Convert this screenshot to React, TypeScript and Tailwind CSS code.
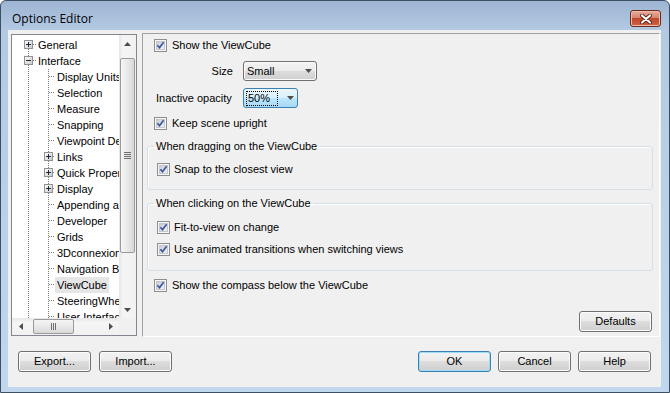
import * as React from "react";

type Row = { l: 0 | 1; t: string; e?: "plus" | "minus"; first?: boolean; sel?: boolean };

const ROWS: Row[] = [
  { l: 0, t: "General", e: "plus", first: true },
  { l: 0, t: "Interface", e: "minus" },
  { l: 1, t: "Display Units" },
  { l: 1, t: "Selection" },
  { l: 1, t: "Measure" },
  { l: 1, t: "Snapping" },
  { l: 1, t: "Viewpoint Defaults" },
  { l: 1, t: "Links", e: "plus" },
  { l: 1, t: "Quick Properties", e: "plus" },
  { l: 1, t: "Display", e: "plus" },
  { l: 1, t: "Appending and Merging" },
  { l: 1, t: "Developer" },
  { l: 1, t: "Grids" },
  { l: 1, t: "3Dconnexion" },
  { l: 1, t: "Navigation Bar" },
  { l: 1, t: "ViewCube", sel: true },
  { l: 1, t: "SteeringWheels" },
  { l: 1, t: "User Interface" },
];

// Win7-ish expander box
function Expander({ x, kind }: { x: number; kind: "plus" | "minus" }) {
  const c = x + 4.5;
  return (
    <g>
      <rect x={x + 0.5} y={3.5} width={8} height={8} fill="url(#exp)" stroke="#919191" />
      <path d={`M${x + 2} 7.5H${x + 7}`} stroke="#1e2a3c" />
      {kind === "plus" && <path d={`M${c} 5V10`} stroke="#1e2a3c" />}
    </g>
  );
}

function TreeLines({ row }: { row: Row }) {
  const dot = { stroke: "#7c7c7c", strokeDasharray: "1 1" };
  if (row.l === 0) {
    return (
      <svg width="24" height="16" className="shrink-0">
        <line x1="16.5" y1={row.first ? 8 : 0} x2="16.5" y2="16" {...dot} />
        <line x1="21" y1="7.5" x2="24" y2="7.5" {...dot} />
        {row.e && <Expander x={12} kind={row.e} />}
      </svg>
    );
  }
  return (
    <svg width="43" height="16" className="shrink-0">
      <line x1="16.5" y1="0" x2="16.5" y2="16" {...dot} />
      <line x1="36.5" y1="0" x2="36.5" y2="16" {...dot} />
      <line x1={row.e ? 41 : 37} y1="7.5" x2="43" y2="7.5" {...dot} />
      {row.e && <Expander x={32} kind={row.e} />}
    </svg>
  );
}

function Arrow({ dir }: { dir: "up" | "down" | "left" | "right" }) {
  const d = {
    up: "M0 4L3.5 0L7 4Z",
    down: "M0 0L3.5 4L7 0Z",
    left: "M4 0L0 3.5L4 7Z",
    right: "M0 0L4 3.5L0 7Z",
  }[dir];
  const v = dir === "up" || dir === "down";
  return (
    <svg width={v ? 7 : 4} height={v ? 4 : 7}>
      <path d={d} fill="#4d4d4d" />
    </svg>
  );
}

function CheckBox() {
  return (
    <svg width="13" height="13" viewBox="0 0 13 13" className="shrink-0">
      <defs>
        <linearGradient id="cbg" x1="0" y1="0" x2="1" y2="1">
          <stop offset="0" stopColor="#c5cad1" />
          <stop offset="1" stopColor="#f4f4f4" />
        </linearGradient>
      </defs>
      <rect x="0.5" y="0.5" width="12" height="12" fill="#f6f6f6" stroke="#8e8f8f" />
      <rect x="2.5" y="2.5" width="8" height="8" fill="url(#cbg)" stroke="#c3c7cc" />
      <path d="M3.4 6.2L5.5 8.7L9.6 3.2" fill="none" stroke="#3a56a0" strokeWidth="1.7" />
    </svg>
  );
}

function Check({ label, inGroup }: { label: string; inGroup?: boolean }) {
  return (
    <div className={`flex h-[16px] items-center ${inGroup ? "gap-[4px]" : "gap-[5px]"}`}>
      <CheckBox />
      <span className="leading-[16px]">{label}</span>
    </div>
  );
}

function Btn({ label, def, className = "" }: { label: string; def?: boolean; className?: string }) {
  return (
    <div
      className={`flex h-[21px] w-[73px] shrink-0 items-center justify-center rounded-[3px] border bg-[linear-gradient(#f2f2f2,#ebebeb_50%,#dddddd_50%,#cfcfcf)] ${
        def
          ? "border-[#3c7fb1] shadow-[inset_0_0_0_1px_#9fdcf8]"
          : "border-[#707070] shadow-[inset_0_0_0_1px_#fbfbfb]"
      } ${className}`}
    >
      {label}
    </div>
  );
}

function Group({ title, children }: { title: string; children: React.ReactNode }) {
  return (
    <fieldset className="ml-[4px] w-[506px] rounded-[3px] border border-[#d5dfe5] shadow-[inset_1px_1px_0_#ffffff]">
      <legend className="ml-[6px] px-[2px] leading-[14px]">{title}</legend>
      <div className="pl-[9px]">{children}</div>
    </fieldset>
  );
}

export default function App() {
  return (
    <div className="flex h-[393px] w-[670px] flex-col overflow-hidden rounded-t-[6px] border border-[#3d4f63] bg-[linear-gradient(#9db5d3,#b4cae3_30px,#c1d7ee)] font-['Liberation_Sans',Arial,sans-serif] text-[11px] text-black">
      {/* Title bar */}
      <div className="flex h-[29px] shrink-0 items-start justify-between">
        <span className="ml-[11px] mt-[10px] font-['Open_Sans',sans-serif] text-[12px] leading-[16px]">
          Options Editor
        </span>
        <div className="mr-[8px] mt-[9px] flex h-[17px] w-[31px] items-center justify-center rounded-[3px] border border-[#6b2a1e] bg-[linear-gradient(#e8ab9a,#d58671_45%,#c2462c_50%,#cd6146)] shadow-[inset_0_0_0_1px_#eebcae]">
          <svg width="12" height="10" viewBox="0 0 12 10">
            <path d="M2 1.5L10 8.5M10 1.5L2 8.5" stroke="#5b2218" strokeWidth="4" strokeLinecap="round" />
            <path d="M2 1.5L10 8.5M10 1.5L2 8.5" stroke="#ffffff" strokeWidth="2.2" strokeLinecap="round" />
          </svg>
        </div>
      </div>

      {/* Client area */}
      <div className="mb-[5px] ml-[7px] mr-[8px] flex flex-1 flex-col bg-[#f0f0f0]">
        <div className="ml-[3px] mt-[3px] flex h-[304px]">
          {/* Tree */}
          <div className="mt-[1px] flex h-[302px] w-[126px] flex-col border border-[#828790] bg-white">
            <svg width="0" height="0" className="absolute">
              <defs>
                <linearGradient id="exp" x1="0" y1="0" x2="1" y2="1">
                  <stop offset="0" stopColor="#ffffff" />
                  <stop offset="1" stopColor="#c8c8c8" />
                </linearGradient>
              </defs>
            </svg>
            <div className="flex h-[283px]">
              <div className="w-[107px] overflow-hidden pt-[2px]">
                {ROWS.map((r) => (
                  <div key={r.t} className="flex h-[16px] items-center whitespace-nowrap">
                    <TreeLines row={r} />
                    <span className={`px-[2px] leading-[16px] ${r.sel ? "bg-[#e6e6e6]" : ""}`}>{r.t}</span>
                  </div>
                ))}
              </div>
              <div className="flex w-[17px] flex-col bg-[linear-gradient(to_right,#e6e6e6,#f5f5f5_25%,#f1f1f1)]">
                <div className="flex h-[17px] items-center justify-center">
                  <Arrow dir="up" />
                </div>
                <div className="flex-1 px-[1px] pt-[6px]">
                  <div className="flex h-[195px] items-center justify-center rounded-[2px] border border-[#9a9a9a] bg-[linear-gradient(to_right,#f5f5f5,#e8e8e8_50%,#d9d9d9)]">
                    <div className="flex flex-col gap-[1px]">
                      <div className="h-[1px] w-[7px] bg-[#6e6e6e]" />
                      <div className="h-[1px] w-[7px] bg-[#6e6e6e]" />
                      <div className="h-[1px] w-[7px] bg-[#6e6e6e]" />
                      <div className="h-[1px] w-[7px] bg-[#6e6e6e]" />
                    </div>
                  </div>
                </div>
                <div className="flex h-[17px] items-center justify-center">
                  <Arrow dir="down" />
                </div>
              </div>
            </div>
            <div className="flex h-[17px]">
              <div className="flex w-[107px] items-center bg-[linear-gradient(#e6e6e6,#f5f5f5_25%,#f1f1f1)]">
                <div className="flex w-[17px] items-center justify-center">
                  <Arrow dir="left" />
                </div>
                <div className="ml-[4px] flex h-[15px] w-[41px] items-center justify-center gap-[1px] rounded-[2px] border border-[#9a9a9a] bg-[linear-gradient(#f5f5f5,#e8e8e8_50%,#d9d9d9)]">
                  <div className="h-[7px] w-[1px] bg-[#6e6e6e]" />
                  <div className="h-[7px] w-[1px] bg-[#6e6e6e]" />
                  <div className="h-[7px] w-[1px] bg-[#6e6e6e]" />
                </div>
                <div className="flex-1" />
                <div className="flex w-[17px] items-center justify-center">
                  <Arrow dir="right" />
                </div>
              </div>
              <div className="w-[17px] bg-[#f0f0f0]" />
            </div>
          </div>

          {/* Settings panel */}
          <div className="ml-[5px] flex h-[304px] w-[518px] flex-col border-b border-l border-r border-t border-b-white border-l-[#a0a0a0] border-r-white border-t-[#a0a0a0]">
            <div className="ml-[11px] mt-[3px]">
              <Check label="Show the ViewCube" />
            </div>
            <div className="mt-[8px] flex h-[20px] items-center pl-[13px]">
              <span className="w-[87px] pr-[10px] text-right">Size</span>
              <div className="flex h-[20px] w-[74px] items-center justify-between rounded-[3px] border border-[#707070] bg-[linear-gradient(#f2f2f2,#ebebeb_50%,#dddddd_50%,#cfcfcf)] pl-[3px] pr-[4px] shadow-[inset_0_0_0_1px_#fbfbfb]">
                <span>Small</span>
                <Arrow dir="down" />
              </div>
            </div>
            <div className="mt-[7px] flex h-[20px] items-center pl-[13px]">
              <span className="w-[87px]">Inactive opacity</span>
              <div className="flex h-[20px] w-[55px] items-center justify-between rounded-[3px] border border-[#3c7fb1] bg-[linear-gradient(#eaf6fd,#d9f0fc_50%,#bee6fd_50%,#a7d9f5)] pl-[2px] pr-[3px]">
                <span className="flex h-[15px] w-[32px] items-center border border-dotted border-black pl-[1px]">50%</span>
                <Arrow dir="down" />
              </div>
            </div>
            <div className="ml-[11px] mt-[7px]">
              <Check label="Keep scene upright" />
            </div>

            <div className="mt-[8px]">
              <Group title="When dragging on the ViewCube">
                <div className="mt-[8px] pb-[12px]">
                  <Check label="Snap to the closest view" inGroup />
                </div>
              </Group>
            </div>

            <div className="mt-[6px]">
              <Group title="When clicking on the ViewCube">
                <div className="mt-[9px] flex flex-col gap-[6px] pb-[13px]">
                  <Check label="Fit-to-view on change" inGroup />
                  <Check label="Use animated transitions when switching views" inGroup />
                </div>
              </Group>
            </div>

            <div className="ml-[11px] mt-[6px]">
              <Check label="Show the compass below the ViewCube" />
            </div>

            <div className="flex-1" />
            <Btn label="Defaults" className="mb-[4px] mr-[7px] self-end" />
          </div>
        </div>

        {/* Dialog buttons */}
        <div className="mt-[14px] flex px-[10px]">
          <Btn label="Export..." />
          <Btn label="Import..." className="ml-[8px]" />
          <div className="flex-1" />
          <div className="flex gap-[7px]">
            <Btn label="OK" def />
            <Btn label="Cancel" />
            <Btn label="Help" />
          </div>
        </div>
      </div>
    </div>
  );
}
